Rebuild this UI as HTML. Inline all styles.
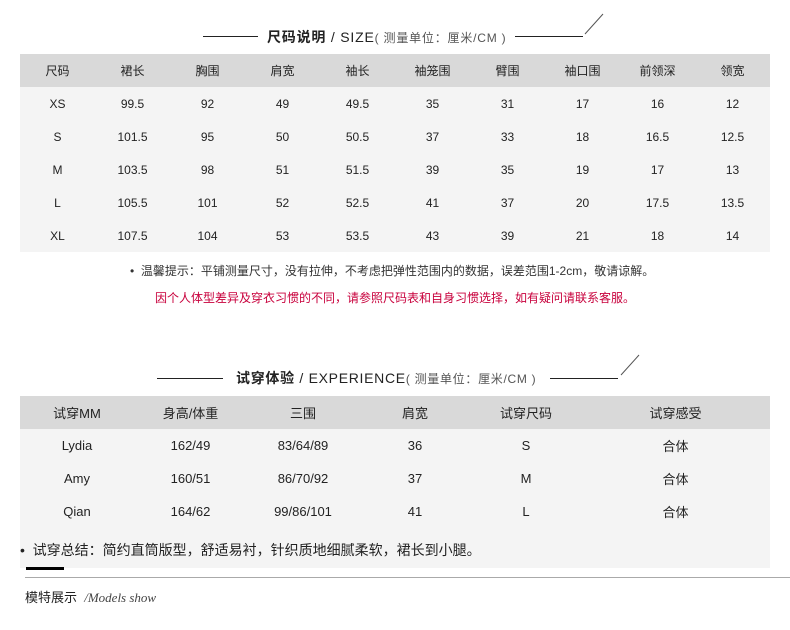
<!DOCTYPE html>
<html><head><meta charset="utf-8"><style>
body{margin:0;width:790px;height:630px;background:#fff;font-family:"Liberation Sans","Noto Sans CJK SC",sans-serif;color:#222;position:relative;overflow:hidden}
.a{position:absolute}
table{position:absolute;border-collapse:collapse;table-layout:fixed;font-size:12px}
td{text-align:center;padding:0;height:33px}
.h td{background:#d9d9d9}
.r td{background:#f4f4f4}
.line{position:absolute;height:1px;background:#222}
</style></head><body>
<div class="line" style="left:203px;top:36px;width:55px"></div>
<div class="a" style="left:267px;top:27px;font-size:14px;white-space:nowrap;letter-spacing:0.8px"><b>尺码说明</b> / SIZE<span style="font-size:12px;color:#555">( 测量单位：厘米/CM )</span></div>
<div class="line" style="left:515px;top:36px;width:68px"></div>
<svg class="a" style="left:583px;top:12px" width="22" height="24"><line x1="2" y1="22" x2="20" y2="2" stroke="#555"/></svg>
<table style="left:20px;top:54px;width:750px">
<tr class="h"><td>尺码</td><td>裙长</td><td>胸围</td><td>肩宽</td><td>袖长</td><td>袖笼围</td><td>臂围</td><td>袖口围</td><td>前领深</td><td>领宽</td></tr>
<tr class="r"><td>XS</td><td>99.5</td><td>92</td><td>49</td><td>49.5</td><td>35</td><td>31</td><td>17</td><td>16</td><td>12</td></tr>
<tr class="r"><td>S</td><td>101.5</td><td>95</td><td>50</td><td>50.5</td><td>37</td><td>33</td><td>18</td><td>16.5</td><td>12.5</td></tr>
<tr class="r"><td>M</td><td>103.5</td><td>98</td><td>51</td><td>51.5</td><td>39</td><td>35</td><td>19</td><td>17</td><td>13</td></tr>
<tr class="r"><td>L</td><td>105.5</td><td>101</td><td>52</td><td>52.5</td><td>41</td><td>37</td><td>20</td><td>17.5</td><td>13.5</td></tr>
<tr class="r"><td>XL</td><td>107.5</td><td>104</td><td>53</td><td>53.5</td><td>43</td><td>39</td><td>21</td><td>18</td><td>14</td></tr>
</table>
<div class="a" style="left:130px;top:262px;font-size:12px;color:#333;white-space:nowrap">•&nbsp; 温馨提示：平铺测量尺寸，没有拉伸，不考虑把弹性范围内的数据，误差范围1-2cm，敬请谅解。</div>
<div class="a" style="left:155px;top:289px;font-size:12px;color:#c8003c;white-space:nowrap">因个人体型差异及穿衣习惯的不同，请参照尺码表和自身习惯选择，如有疑问请联系客服。</div>
<div class="line" style="left:157px;top:378px;width:66px"></div>
<div class="a" style="left:236px;top:368px;font-size:14px;white-space:nowrap;letter-spacing:0.7px"><b>试穿体验</b> / EXPERIENCE<span style="font-size:12px;color:#555">( 测量单位：厘米/CM )</span></div>
<div class="line" style="left:550px;top:378px;width:68px"></div>
<svg class="a" style="left:619px;top:353px" width="22" height="24"><line x1="2" y1="22" x2="20" y2="2" stroke="#555"/></svg>
<table style="left:20px;top:396px;width:750px;font-size:13px">
<colgroup><col style="width:114px"><col style="width:113px"><col style="width:112px"><col style="width:112px"><col style="width:110px"><col></colgroup>
<tr class="h"><td>试穿MM</td><td>身高/体重</td><td>三围</td><td>肩宽</td><td>试穿尺码</td><td>试穿感受</td></tr>
<tr class="r"><td>Lydia</td><td>162/49</td><td>83/64/89</td><td>36</td><td>S</td><td>合体</td></tr>
<tr class="r"><td>Amy</td><td>160/51</td><td>86/70/92</td><td>37</td><td>M</td><td>合体</td></tr>
<tr class="r"><td>Qian</td><td>164/62</td><td>99/86/101</td><td>41</td><td>L</td><td>合体</td></tr>
</table>
<div class="a" style="left:20px;top:528px;width:750px;height:40px;background:#f4f4f4"></div>
<div class="a" style="left:20px;top:540px;font-size:14px;white-space:nowrap">•&nbsp; 试穿总结：简约直筒版型，舒适易衬，针织质地细腻柔软，裙长到小腿。</div>
<div class="a" style="left:26px;top:567px;width:38px;height:3px;background:#000"></div>
<div class="a" style="left:25px;top:577px;width:765px;height:1px;background:#aaa"></div>
<div class="a" style="left:25px;top:587px;font-size:13px;white-space:nowrap">模特展示 &nbsp;<i style="font-family:'Liberation Serif',serif;color:#444">/Models show</i></div>
</body></html>
